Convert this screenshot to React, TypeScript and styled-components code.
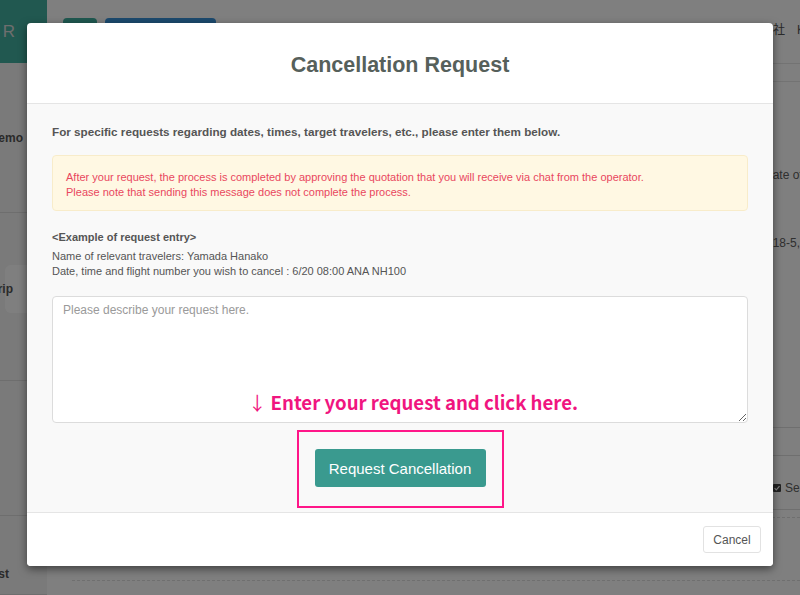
import React from 'react';
import styled, { createGlobalStyle } from 'styled-components';

const GlobalStyle = createGlobalStyle`
  html, body {
    margin: 0;
    padding: 0;
    width: 800px;
    height: 595px;
    overflow: hidden;
    background: #ffffff;
  }
  body {
    font-family: "Liberation Sans", Arial, sans-serif;
    color: #333;
  }
  * { box-sizing: border-box; }
`;

/* ---------- underlying page ---------- */

const Page = styled.div`
  position: relative;
  display: flex;
  width: 800px;
  height: 595px;
  overflow: hidden;
`;

const Sidebar = styled.aside`
  width: 47px;
  flex: none;
  display: flex;
  flex-direction: column;
  background: #f4f4f4;
  overflow: hidden;
`;

const Logo = styled.div`
  height: 63px;
  flex: none;
  display: flex;
  align-items: center;
  justify-content: flex-end;
  padding-right: 30px;
  background: #42b0a0;
  color: #dcdcdc;
  font-family: "Liberation Sans", Arial, sans-serif;
  font-size: 17px;
  letter-spacing: 2px;
  white-space: nowrap;
`;

const NavGroup = styled.div<{ $h: number; $pt: number }>`
  height: ${(p) => p.$h}px;
  flex: none;
  padding-top: ${(p) => p.$pt}px;
  border-bottom: 1px solid #dcdcdc;
`;

const NavItem = styled.div<{ $active?: boolean; $pr: number }>`
  height: 48px;
  display: flex;
  align-items: center;
  justify-content: flex-end;
  padding-right: ${(p) => p.$pr}px;
  margin-left: 5px;
  border-radius: 6px 0 0 6px;
  background: ${(p) => (p.$active ? '#ffffff' : 'transparent')};
  color: #555;
  font-size: 12px;
  font-weight: bold;
  white-space: nowrap;
`;

const Main = styled.main`
  flex: 1;
  min-width: 0;
  display: flex;
  flex-direction: column;
  background: #ffffff;
`;

const TopBar = styled.header`
  height: 64px;
  flex: none;
  display: grid;
  grid-template-columns: 674px 1fr;
  align-items: start;
  padding: 18px 0 0 16px;
  border-bottom: 1px solid #e6e6e6;
`;

const TopButtons = styled.div`
  display: flex;
  gap: 8px;
`;

const TopButton = styled.div<{ $color: string; $w: number }>`
  width: ${(p) => p.$w}px;
  height: 30px;
  border-radius: 4px;
  background: ${(p) => p.$color};
`;

const Account = styled.div`
  line-height: 24px;
  font-size: 12px;
  color: #555;
  white-space: nowrap;
  font-family: "Liberation Sans", "Noto Sans CJK JP", sans-serif;
`;

const TabStrip = styled.div`
  height: 18px;
  flex: none;
  border-bottom: 1px solid #e6e6e6;
`;

const Content = styled.div`
  display: flex;
  flex-direction: column;
  padding: 81px 0 0 25px;
`;

const InfoRow = styled.div<{ $mt?: number }>`
  display: grid;
  grid-template-columns: 694px 1fr;
  height: 24px;
  line-height: 24px;
  margin-top: ${(p) => p.$mt ?? 0}px;
  font-size: 12px;
  color: #606060;
  white-space: nowrap;
`;

const Rule = styled.div<{ $mt: number; $dashed?: boolean }>`
  margin-top: ${(p) => p.$mt}px;
  border-top: 1px ${(p) => (p.$dashed ? 'dashed' : 'solid')} #dedede;
`;

const CheckRow = styled.div`
  display: grid;
  grid-template-columns: 701px 1fr;
  height: 53px;
  padding-top: 11px;
  align-items: center;
  font-size: 12px;
  color: #606060;
  white-space: nowrap;
`;

const CheckLabel = styled.span`
  display: inline-flex;
  align-items: center;
  gap: 4px;
`;

/* ---------- modal ---------- */

const Backdrop = styled.div`
  position: absolute;
  inset: 0;
  background: rgba(0, 0, 0, 0.5);
`;

const Dialog = styled.div`
  position: absolute;
  left: 27px;
  top: 23px;
  width: 746px;
  display: flex;
  flex-direction: column;
  background: #ffffff;
  border-radius: 4px;
  box-shadow: 0 3px 9px rgba(0, 0, 0, 0.5);
  overflow: hidden;
`;

const DialogHeader = styled.div`
  height: 81px;
  display: flex;
  align-items: center;
  justify-content: center;
  padding-top: 4px;
  border-bottom: 1px solid #e5e5e5;
`;

const Title = styled.h2`
  margin: 0;
  font-size: 21.5px;
  font-weight: bold;
  color: #56605b;
`;

const DialogBody = styled.div`
  display: flex;
  flex-direction: column;
  padding: 19px 25px 25px;
  background: #f9f9f9;
`;

const Intro = styled.p`
  margin: 0 0 15px;
  font-size: 11.7px;
  line-height: 17px;
  font-weight: bold;
  color: #555;
`;

const Notice = styled.div`
  padding: 14px 13px 10px;
  background: #fff8e3;
  border: 1px solid #f8ecca;
  border-radius: 4px;
  font-size: 11px;
  line-height: 15px;
  color: #e9475e;
`;

const ExampleTitle = styled.div`
  margin-top: 18px;
  font-size: 11px;
  line-height: 16px;
  font-weight: bold;
  color: #555;
`;

const ExampleLines = styled.div`
  margin-top: 4px;
  font-size: 11px;
  line-height: 15px;
  color: #555;
`;

const FieldWrap = styled.div`
  position: relative;
  margin-top: 17px;
`;

const RequestInput = styled.textarea`
  display: block;
  width: 100%;
  height: 127px;
  padding: 5px 10px;
  border: 1px solid #dcdcdc;
  border-radius: 4px;
  background: #ffffff;
  font-family: "Liberation Sans", Arial, sans-serif;
  font-size: 12px;
  line-height: 17px;
  color: #333;
  outline: none;
  &::placeholder { color: #9a9a9a; }
`;

const Annotation = styled.div`
  position: absolute;
  left: 0;
  right: 0;
  bottom: 9px;
  padding-left: 26px;
  text-align: center;
  pointer-events: none;
  font-family: "Noto Sans CJK JP", "Liberation Sans", sans-serif;
  font-size: 18.6px;
  line-height: 24px;
  font-weight: 700;
  color: #f0157f;
  white-space: nowrap;
`;

const Arrow = styled.span`
  font-weight: 400;
  margin-right: 4px;
`;

const ActionRow = styled.div`
  display: flex;
  justify-content: center;
  margin-top: 26px;
`;

const Spot = styled.div`
  position: relative;
`;

const Highlight = styled.span`
  position: absolute;
  top: -19px;
  bottom: -21px;
  left: -18px;
  right: -18px;
  border: 2px solid #ff1689;
  pointer-events: none;
`;

const PrimaryButton = styled.button`
  width: 171px;
  height: 38px;
  border: none;
  border-radius: 3px;
  background: #3a9a8f;
  color: #ffffff;
  font-family: "Liberation Sans", Arial, sans-serif;
  font-size: 15px;
  cursor: pointer;
`;

const DialogFooter = styled.div`
  height: 54px;
  display: flex;
  justify-content: flex-end;
  align-items: flex-start;
  padding: 13px 12px 0;
  border-top: 1px solid #e5e5e5;
  background: #ffffff;
`;

const SecondaryButton = styled.button`
  width: 58px;
  height: 27px;
  border: 1px solid #e2e2e2;
  border-radius: 3px;
  background: #ffffff;
  color: #555;
  font-family: "Liberation Sans", Arial, sans-serif;
  font-size: 12px;
  cursor: pointer;
`;

const CheckIcon = () => (
  <svg width="8" height="8" viewBox="0 0 8 8">
    <rect x="0" y="0" width="8" height="8" rx="1" fill="#444" />
    <path d="M1.6 4.1 L3.3 5.8 L6.5 2.2" stroke="#fff" strokeWidth="1.2" fill="none" />
  </svg>
);

export default function App() {
  return (
    <>
      <GlobalStyle />
      <Page>
        <Sidebar>
          <Logo>TOUR</Logo>
          <NavGroup $h={150} $pt={51}>
            <NavItem $pr={24}>Travel Memo</NavItem>
          </NavGroup>
          <NavGroup $h={168} $pt={52}>
            <NavItem $active $pr={34}>Trip</NavItem>
          </NavGroup>
          <NavGroup $h={135} $pt={0} />
          <NavGroup $h={79} $pt={34}>
            <NavItem $pr={38}>Request</NavItem>
          </NavGroup>
        </Sidebar>
        <Main>
          <TopBar>
            <TopButtons>
              <TopButton $color="#3eb0a0" $w={34} />
              <TopButton $color="#3894dc" $w={111} />
            </TopButtons>
            <Account>株式会社　KIZUNA Travel</Account>
          </TopBar>
          <TabStrip />
          <Content>
            <InfoRow>
              <span>Departure</span>
              <span>date of travel</span>
            </InfoRow>
            <InfoRow $mt={44}>
              <span>Address</span>
              <span>#18-5, Nishi-Shinjuku</span>
            </InfoRow>
            <Rule $mt={172} />
            <Rule $mt={27} />
            <CheckRow>
              <span />
              <CheckLabel>
                <CheckIcon />
                Send notification
              </CheckLabel>
            </CheckRow>
            <Rule $mt={0} />
            <Rule $mt={7} $dashed />
            <Rule $mt={62} $dashed />
          </Content>
        </Main>

        <Backdrop />

        <Dialog role="dialog" aria-modal="true">
          <DialogHeader>
            <Title>Cancellation Request</Title>
          </DialogHeader>
          <DialogBody>
            <Intro>
              For specific requests regarding dates, times, target travelers, etc., please enter them below.
            </Intro>
            <Notice>
              After your request, the process is completed by approving the quotation that you will receive via chat from the operator.
              <br />
              Please note that sending this message does not complete the process.
            </Notice>
            <ExampleTitle>&lt;Example of request entry&gt;</ExampleTitle>
            <ExampleLines>
              Name of relevant travelers: Yamada Hanako
              <br />
              Date, time and flight number you wish to cancel : 6/20 08:00 ANA NH100
            </ExampleLines>
            <FieldWrap>
              <RequestInput placeholder="Please describe your request here." />
              <Annotation>
                <Arrow>↓</Arrow>Enter your request and click here.
              </Annotation>
            </FieldWrap>
            <ActionRow>
              <Spot>
                <PrimaryButton>Request Cancellation</PrimaryButton>
                <Highlight />
              </Spot>
            </ActionRow>
          </DialogBody>
          <DialogFooter>
            <SecondaryButton>Cancel</SecondaryButton>
          </DialogFooter>
        </Dialog>
      </Page>
    </>
  );
}
